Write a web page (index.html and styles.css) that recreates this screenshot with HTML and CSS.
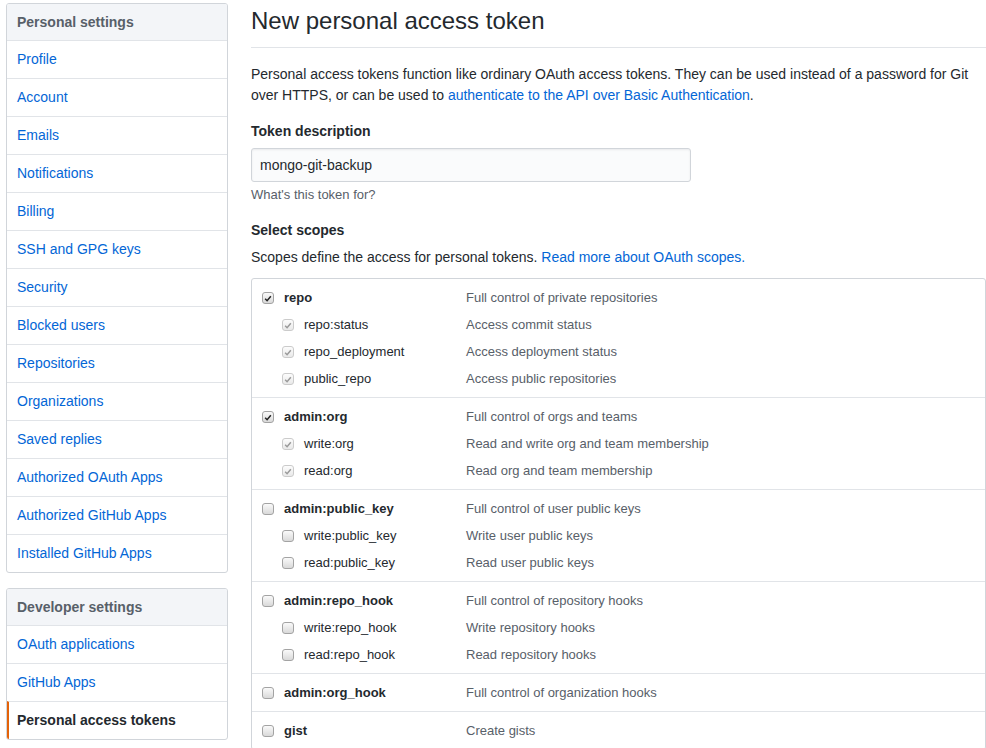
FILE: index.html
```html
<!DOCTYPE html>
<html>
<head>
<meta charset="utf-8">
<title>New personal access token</title>
<link rel="stylesheet" href="styles.css">
</head>
<body>
<div class="page">
  <aside class="sidebar">
    <nav class="menu">
      <div class="menu-heading">Personal settings</div>
      <a class="menu-item" href="#">Profile</a>
      <a class="menu-item" href="#">Account</a>
      <a class="menu-item" href="#">Emails</a>
      <a class="menu-item" href="#">Notifications</a>
      <a class="menu-item" href="#">Billing</a>
      <a class="menu-item" href="#">SSH and GPG keys</a>
      <a class="menu-item" href="#">Security</a>
      <a class="menu-item" href="#">Blocked users</a>
      <a class="menu-item" href="#">Repositories</a>
      <a class="menu-item" href="#">Organizations</a>
      <a class="menu-item" href="#">Saved replies</a>
      <a class="menu-item" href="#">Authorized OAuth Apps</a>
      <a class="menu-item" href="#">Authorized GitHub Apps</a>
      <a class="menu-item" href="#">Installed GitHub Apps</a>
    </nav>
    <nav class="menu">
      <div class="menu-heading">Developer settings</div>
      <a class="menu-item" href="#">OAuth applications</a>
      <a class="menu-item" href="#">GitHub Apps</a>
      <a class="menu-item selected" href="#">Personal access tokens</a>
    </nav>
  </aside>

  <main class="main">
    <h1 class="title">New personal access token</h1>
    <p class="intro">Personal access tokens function like ordinary OAuth access tokens. They can be used instead of a password for Git over HTTPS, or can be used to <a href="#">authenticate to the API over Basic Authentication</a>.</p>

    <div class="form-group">
      <label class="form-label">Token description</label>
      <input class="form-input" type="text" value="mongo-git-backup">
      <p class="note">What's this token for?</p>
    </div>

    <div class="form-group">
      <label class="form-label">Select scopes</label>
      <p class="scopes-intro">Scopes define the access for personal tokens. <a href="#">Read more about OAuth scopes.</a></p>

      <div class="scopes">
        <div class="scope-group">
          <div class="scope-row">
            <span class="scope-name top"><span class="cb checked"><svg viewBox="0 0 12 12" width="12" height="12"><path d="M2.6 6.3 L4.9 8.6 L9.4 3.2" fill="none" stroke="#222" stroke-width="1.8"/></svg></span>repo</span>
            <span class="scope-desc">Full control of private repositories</span>
          </div>
          <div class="scope-row">
            <span class="scope-name sub"><span class="cb checked disabled"><svg viewBox="0 0 12 12" width="12" height="12"><path d="M2.6 6.3 L4.9 8.6 L9.4 3.2" fill="none" stroke="#9a9a9a" stroke-width="1.8"/></svg></span>repo:status</span>
            <span class="scope-desc">Access commit status</span>
          </div>
          <div class="scope-row">
            <span class="scope-name sub"><span class="cb checked disabled"><svg viewBox="0 0 12 12" width="12" height="12"><path d="M2.6 6.3 L4.9 8.6 L9.4 3.2" fill="none" stroke="#9a9a9a" stroke-width="1.8"/></svg></span>repo_deployment</span>
            <span class="scope-desc">Access deployment status</span>
          </div>
          <div class="scope-row">
            <span class="scope-name sub"><span class="cb checked disabled"><svg viewBox="0 0 12 12" width="12" height="12"><path d="M2.6 6.3 L4.9 8.6 L9.4 3.2" fill="none" stroke="#9a9a9a" stroke-width="1.8"/></svg></span>public_repo</span>
            <span class="scope-desc">Access public repositories</span>
          </div>
        </div>

        <div class="scope-group">
          <div class="scope-row">
            <span class="scope-name top"><span class="cb checked"><svg viewBox="0 0 12 12" width="12" height="12"><path d="M2.6 6.3 L4.9 8.6 L9.4 3.2" fill="none" stroke="#222" stroke-width="1.8"/></svg></span>admin:org</span>
            <span class="scope-desc">Full control of orgs and teams</span>
          </div>
          <div class="scope-row">
            <span class="scope-name sub"><span class="cb checked disabled"><svg viewBox="0 0 12 12" width="12" height="12"><path d="M2.6 6.3 L4.9 8.6 L9.4 3.2" fill="none" stroke="#9a9a9a" stroke-width="1.8"/></svg></span>write:org</span>
            <span class="scope-desc">Read and write org and team membership</span>
          </div>
          <div class="scope-row">
            <span class="scope-name sub"><span class="cb checked disabled"><svg viewBox="0 0 12 12" width="12" height="12"><path d="M2.6 6.3 L4.9 8.6 L9.4 3.2" fill="none" stroke="#9a9a9a" stroke-width="1.8"/></svg></span>read:org</span>
            <span class="scope-desc">Read org and team membership</span>
          </div>
        </div>

        <div class="scope-group">
          <div class="scope-row">
            <span class="scope-name top"><span class="cb"></span>admin:public_key</span>
            <span class="scope-desc">Full control of user public keys</span>
          </div>
          <div class="scope-row">
            <span class="scope-name sub"><span class="cb"></span>write:public_key</span>
            <span class="scope-desc">Write user public keys</span>
          </div>
          <div class="scope-row">
            <span class="scope-name sub"><span class="cb"></span>read:public_key</span>
            <span class="scope-desc">Read user public keys</span>
          </div>
        </div>

        <div class="scope-group">
          <div class="scope-row">
            <span class="scope-name top"><span class="cb"></span>admin:repo_hook</span>
            <span class="scope-desc">Full control of repository hooks</span>
          </div>
          <div class="scope-row">
            <span class="scope-name sub"><span class="cb"></span>write:repo_hook</span>
            <span class="scope-desc">Write repository hooks</span>
          </div>
          <div class="scope-row">
            <span class="scope-name sub"><span class="cb"></span>read:repo_hook</span>
            <span class="scope-desc">Read repository hooks</span>
          </div>
        </div>

        <div class="scope-group">
          <div class="scope-row">
            <span class="scope-name top"><span class="cb"></span>admin:org_hook</span>
            <span class="scope-desc">Full control of organization hooks</span>
          </div>
        </div>

        <div class="scope-group">
          <div class="scope-row">
            <span class="scope-name top"><span class="cb"></span>gist</span>
            <span class="scope-desc">Create gists</span>
          </div>
        </div>
      </div>
    </div>
  </main>
</div>
</body>
</html>
```
FILE: styles.css
```css
html, body {
  margin: 0;
  padding: 0;
  background: #fff;
}

body {
  font-family: "Liberation Sans", Arial, Helvetica, sans-serif;
  font-size: 14px;
  line-height: 1.5;
  color: #24292e;
  overflow: hidden;
}

a {
  color: #0366d6;
  text-decoration: none;
}

.page {
  display: grid;
  grid-template-columns: 222px 1fr;
  column-gap: 23px;
  padding: 3px 0 0 6px;
}

/* Sidebar */
.sidebar {
  display: flex;
  flex-direction: column;
  gap: 15px;
}

.menu {
  border: 1px solid #d1d5da;
  border-radius: 3px;
  overflow: hidden;
  display: flex;
  flex-direction: column;
}

.menu-heading {
  background: #f3f5f8;
  color: #586069;
  font-weight: bold;
  font-size: 14px;
  line-height: 20px;
  padding: 8px 10px;
}

.menu-item {
  border-top: 1px solid #e1e4e8;
  padding: 8px 10px;
  line-height: 21px;
  font-size: 14px;
  color: #0366d6;
}

.menu-item.selected {
  color: #24292e;
  font-weight: bold;
  border-left: 2px solid #e36209;
  padding-left: 8px;
}

/* Main */
.main {
  min-width: 0;
}

.title {
  margin: 3px 0 16px 0;
  padding-bottom: 11px;
  border-bottom: 1px solid #e1e4e8;
  font-size: 24px;
  font-weight: normal;
  line-height: 30px;
  color: #24292e;
}

.intro {
  margin: 0 0 15px 0;
  line-height: 21px;
  padding-right: 10px;
}

.form-group {
  margin-bottom: 16px;
}

.form-label {
  display: block;
  font-weight: bold;
  line-height: 21px;
  margin-bottom: 6px;
}

.form-input {
  display: block;
  box-sizing: border-box;
  width: 440px;
  height: 34px;
  padding: 6px 8px;
  font-family: inherit;
  font-size: 14px;
  color: #24292e;
  background: #fafbfc;
  border: 1px solid #d1d5da;
  border-radius: 3px;
  box-shadow: inset 0 1px 2px rgba(27, 31, 35, 0.075);
  outline: none;
}

.note {
  margin: 4px 0 0 0;
  font-size: 13px;
  line-height: 18px;
  color: #586069;
}

.scopes-intro {
  margin: 0 0 10px 0;
  line-height: 21px;
}

.scopes {
  border: 1px solid #d1d5da;
  border-radius: 3px;
  font-size: 13px;
}

.scope-group {
  padding: 5px 10px;
  border-top: 1px solid #e1e4e8;
}

.scope-group:first-child {
  border-top: none;
}

.scope-row {
  display: grid;
  grid-template-columns: 204px 1fr;
  align-items: center;
  height: 27px;
  line-height: 27px;
}

.scope-name {
  display: flex;
  align-items: center;
  gap: 10px;
  color: #24292e;
}

.scope-name.top {
  font-weight: bold;
}

.scope-name.sub {
  padding-left: 20px;
}

.scope-desc {
  color: #586069;
}

.cb {
  flex: none;
  box-sizing: border-box;
  width: 12px;
  height: 12px;
  margin-top: 1px;
  border: 1px solid #a3a3a3;
  border-radius: 3px;
  background: linear-gradient(#fafafa, #d9d9d9);
  display: flex;
  align-items: center;
  justify-content: center;
}

.cb svg {
  display: block;
  width: 11px;
  height: 11px;
}

.cb.disabled {
  border-color: #cbcbcb;
  background: linear-gradient(#fcfcfc, #e9e9e9);
}
```
